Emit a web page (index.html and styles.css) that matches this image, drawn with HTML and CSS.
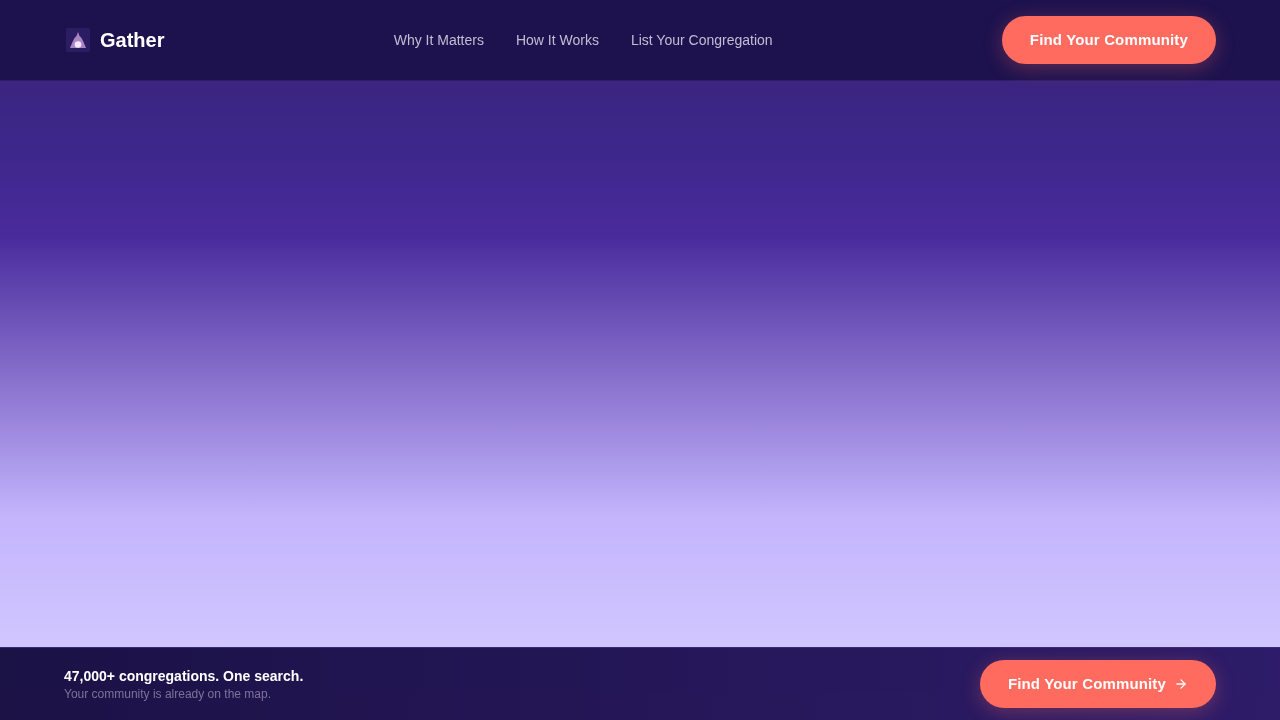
FILE: index.html
```html
<!DOCTYPE html>
<html>
<head>
  <meta charset="UTF-8">
  <link rel="stylesheet" href="styles.css">
</head>
<body>
  <div class="page">
    <nav class="topbar">
      <a class="logo" href="#">
        <svg class="logo-icon" width="24" height="24" viewBox="0 0 24 24">
          <rect width="24" height="24" rx="2" fill="#2b1d62"/>
          <path d="M12 4 L13.500 8 L15.500 10 L17.500 14 L20 20 L4 20 L6.500 14 L8.500 10 L10.500 8 Z" fill="#ab84c6"/>
          <circle cx="12" cy="16.500" r="3.300" fill="#f3e8f5"/>
        </svg>
        <span>Gather</span>
      </a>
      <div class="nav-links">
        <a href="#">Why It Matters</a>
        <a href="#">How It Works</a>
        <a href="#">List Your Congregation</a>
      </div>
      <a class="cta" href="#">Find Your Community</a>
    </nav>

    <div class="hero"></div>

    <div class="bottom-bar">
      <div class="bottom-text">
        <div class="bottom-title">47,000+ congregations. One search.</div>
        <div class="bottom-sub">Your community is already on the map.</div>
      </div>
      <a class="cta" href="#">
        Find Your Community
        <svg width="14" height="14" viewBox="0 0 24 24" fill="none" stroke="currentColor" stroke-width="2.200" stroke-linecap="round" stroke-linejoin="round">
          <path d="M5 12h14"/>
          <path d="M12 5l7 7-7 7"/>
        </svg>
      </a>
    </div>
  </div>
</body>
</html>
```

FILE: styles.css
```css
* {
  margin: 0;
  padding: 0;
  box-sizing: border-box;
}

body {
  font-family: 'Liberation Sans', Arial, sans-serif;
  background-color: #c9bdfd;
}

a {
  text-decoration: none;
}

.page {
  display: flex;
  flex-direction: column;
  height: 720px;
  overflow: hidden;
  background: linear-gradient(180deg, #2d1b69 0%, #3b2580 11%, #3d278b 21%, #4a2b9c 33%, #c4b5fd 72%, #d8d0ff 100%);
}

.topbar {
  display: flex;
  justify-content: space-between;
  align-items: center;
  height: 81px;
  padding: 0 64px;
  background-color: rgba(29, 18, 78, 0.98);
  border-bottom: 1px solid #2e1e68;
  backdrop-filter: blur(8px);
}

.logo {
  display: flex;
  align-items: center;
  gap: 10px;
  font-size: 20px;
  font-weight: 700;
  color: #ffffff;
}

.logo-icon {
  margin-left: 2px;
}

.nav-links {
  display: flex;
  gap: 32px;
}

.nav-links a {
  font-size: 14px;
  color: #c2bdd2;
}

.cta {
  display: flex;
  align-items: center;
  gap: 8px;
  height: 48px;
  padding: 0 28px 1px;
  border-radius: 24px;
  font-size: 15px;
  font-weight: 700;
  letter-spacing: 0.15px;
  color: #ffffff;
  background-color: #ff6b5e;
  box-shadow: 0 4px 20px rgba(255, 107, 94, 0.3);
}

.hero {
  flex: 1;
}

.bottom-bar {
  display: flex;
  justify-content: space-between;
  align-items: center;
  height: 73px;
  padding: 0 64px;
  background: linear-gradient(90deg, rgba(23, 14, 66, 0.98) 0%, rgba(42, 24, 102, 0.98) 100%);
  border-top: 1px solid #3a2a75;
  backdrop-filter: blur(8px);
}

.bottom-title {
  font-size: 14px;
  font-weight: 700;
  line-height: 20px;
  color: #ffffff;
}

.bottom-sub {
  font-size: 12px;
  line-height: 16px;
  color: #7d7399;
}
```
